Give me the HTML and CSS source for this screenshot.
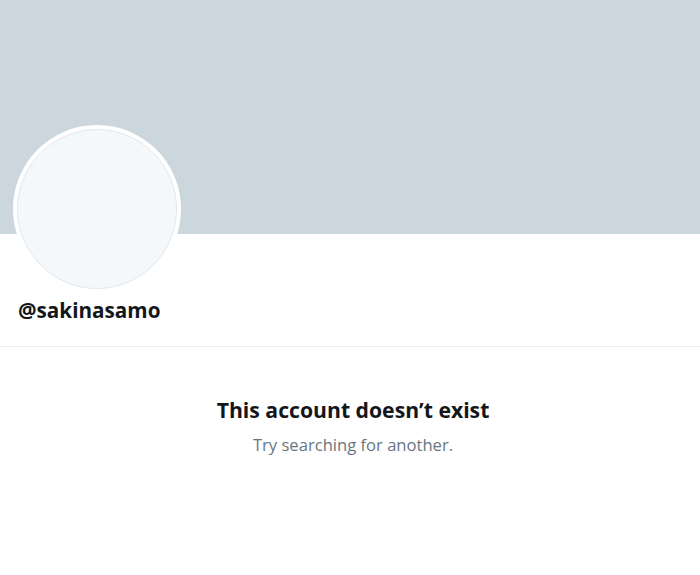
FILE: index.html
```
<!DOCTYPE html>
<html>
<head>
<meta charset="utf-8">
<link rel="stylesheet" href="styles.css">
</head>
<body>
<div class="page">
  <div class="banner"></div>
  <div class="profile">
    <div class="avatar"><div class="avatar-inner"></div></div>
    <div class="handle">@sakinasamo</div>
  </div>
  <div class="empty">
    <div class="title">This account doesn’t exist</div>
    <div class="sub">Try searching for another.</div>
  </div>
</div>
</body>
</html>
```
FILE: styles.css
```
html, body {
  margin: 0;
  padding: 0;
  background: #ffffff;
}
.page {
  width: 700px;
  height: 575px;
  overflow: hidden;
  font-family: "Open Sans", "Noto Sans", sans-serif;
}
.banner {
  height: 234px;
  background: #ccd6dd;
}
.profile {
  display: flex;
  flex-direction: column;
  padding: 0 18px 0 13px;
  height: 113px;
  box-sizing: border-box;
  border-bottom: 1px solid #e6ecf0;
}
.avatar {
  width: 168px;
  height: 168px;
  flex: none;
  margin-top: -109px;
  border-radius: 50%;
  background: #ffffff;
  padding: 4px;
  box-sizing: border-box;
}
.avatar-inner {
  width: 100%;
  height: 100%;
  box-sizing: border-box;
  border-radius: 50%;
  border: 1px solid #e1e8ed;
  background: #f5f8fa;
}
.handle {
  margin-top: 4px;
  margin-left: 5px;
  font-size: 20.7px;
  font-weight: 700;
  color: #14171a;
  line-height: 26px;
}
.empty {
  text-align: center;
  padding-top: 49px;
  padding-left: 6px;
}
.title {
  font-size: 21.2px;
  font-weight: 700;
  color: #14171a;
  line-height: 28px;
}
.sub {
  margin-top: 10px;
  font-size: 16.6px;
  color: #69767f;
  line-height: 22px;
}
```
